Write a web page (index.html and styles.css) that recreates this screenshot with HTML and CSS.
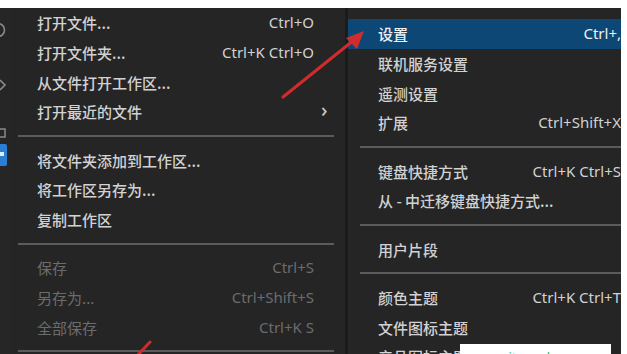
FILE: index.html
```html
<!DOCTYPE html>
<html lang="zh">
<head>
<meta charset="utf-8">
<title>菜单</title>
<link rel="stylesheet" href="styles.css">
</head>
<body>
<div class="top"></div>
<div class="screen">
  <div class="activity">
    <svg width="10" height="346" viewBox="0 0 10 346">
      <circle cx="-2" cy="22" r="6.5" fill="none" stroke="#8a8a8a" stroke-width="1.6"/>
      <path d="M0 72 L5 77 L0 82" fill="none" stroke="#8a8a8a" stroke-width="1.6"/>
      <rect x="-4" y="121" width="9" height="8" fill="none" stroke="#8a8a8a" stroke-width="1.5"/>
      <rect x="-4" y="136" width="11" height="22" rx="2" fill="#2a7fd4"/>
      <rect x="0" y="144" width="4" height="4" fill="#dfeefc"/>
    </svg>
  </div>
  <div class="menu left">
    <div class="item"><span class="label">打开文件...</span><span class="key">Ctrl+O</span><span class="sub"></span></div>
    <div class="item"><span class="label">打开文件夹...</span><span class="key">Ctrl+K Ctrl+O</span><span class="sub"></span></div>
    <div class="item"><span class="label">从文件打开工作区...</span><span class="key"></span><span class="sub"></span></div>
    <div class="item"><span class="label">打开最近的文件</span><span class="key"></span><span class="sub">›</span></div>
    <div class="sep"></div>
    <div class="item"><span class="label">将文件夹添加到工作区...</span><span class="key"></span><span class="sub"></span></div>
    <div class="item"><span class="label">将工作区另存为...</span><span class="key"></span><span class="sub"></span></div>
    <div class="item"><span class="label">复制工作区</span><span class="key"></span><span class="sub"></span></div>
    <div class="sep"></div>
    <div class="item disabled"><span class="label">保存</span><span class="key">Ctrl+S</span><span class="sub"></span></div>
    <div class="item disabled"><span class="label">另存为...</span><span class="key">Ctrl+Shift+S</span><span class="sub"></span></div>
    <div class="item disabled"><span class="label">全部保存</span><span class="key">Ctrl+K S</span><span class="sub"></span></div>
    <div class="sep"></div>
  </div>
  <div class="divider"></div>
  <div class="menu right">
    <div class="item active"><span class="label">设置</span><span class="key">Ctrl+,</span></div>
    <div class="item"><span class="label">联机服务设置</span><span class="key"></span></div>
    <div class="item"><span class="label">遥测设置</span><span class="key"></span></div>
    <div class="item"><span class="label">扩展</span><span class="key">Ctrl+Shift+X</span></div>
    <div class="sep"></div>
    <div class="item"><span class="label">键盘快捷方式</span><span class="key">Ctrl+K Ctrl+S</span></div>
    <div class="item"><span class="label">从 - 中迁移键盘快捷方式...</span><span class="key"></span></div>
    <div class="sep"></div>
    <div class="item"><span class="label">用户片段</span><span class="key"></span></div>
    <div class="sep"></div>
    <div class="item"><span class="label">颜色主题</span><span class="key">Ctrl+K Ctrl+T</span></div>
    <div class="item"><span class="label">文件图标主题</span><span class="key"></span></div>
    <div class="item"><span class="label">产品图标主题</span><span class="key"></span></div>
  </div>
  <div class="edge"></div>
</div>
<svg class="annot" width="627" height="354" viewBox="0 0 627 354">
  <line x1="283" y1="97" x2="354" y2="40" stroke="#d12c2c" stroke-width="3" stroke-linecap="round"/>
  <polygon points="364,31 346,38 357,49" fill="#d12c2c"/>
  <line x1="136" y1="357" x2="150" y2="342" stroke="#d12c2c" stroke-width="3" stroke-linecap="round"/>
</svg>
<div class="watermark"><span class="wm-text">www.xitongcheng.com</span></div>
</body>
</html>
```

FILE: styles.css
```css
html, body {
  margin: 0;
  padding: 0;
  background: #ffffff;
  width: 627px;
  height: 354px;
  overflow: hidden;
  position: relative;
  font-family: "Noto Sans", "Noto Sans CJK SC", sans-serif;
}

.top {
  height: 8px;
}

.screen {
  display: flex;
  height: 346px;
  background: #252526;
  overflow: hidden;
}

.activity {
  width: 10px;
  flex: none;
  background: #262627;
}

.activity svg {
  display: block;
}

.menu {
  display: flex;
  flex-direction: column;
  color: #d2d2d2;
  font-size: 15px;
  overflow: hidden;
}

.left {
  width: 335px;
  flex: none;
}

.divider {
  width: 3px;
  flex: none;
  background: #1b1b1c;
}

.right {
  flex: 1;
  padding-top: 11px;
  min-width: 0;
}

.edge {
  width: 6px;
  flex: none;
  background: #ffffff;
}

.item {
  height: 29.7px;
  flex: none;
  display: grid;
  align-items: center;
  white-space: nowrap;
  font-family: "Noto Sans CJK SC", "Noto Sans", sans-serif;
  font-weight: 500;
}

.left .item {
  grid-template-columns: 1fr auto 31px;
  padding-left: 27px;
}

.right .item {
  grid-template-columns: 1fr auto;
  padding-left: 30px;
  padding-right: 0;
}

.label {
  line-height: 1;
}

.key {
  font-family: "Noto Sans", sans-serif;
  font-weight: 400;
  font-size: 15px;
  line-height: 1;
}

.sub {
  padding-left: 7px;
  font-family: "Noto Sans", sans-serif;
  font-size: 20px;
  line-height: 1;
  color: #c8c8c8;
  position: relative;
  top: -2px;
}

.disabled {
  color: #6c6c6c;
  font-weight: 400;
}

.active {
  background: #0c4776;
  color: #f0f0f0;
}

.sep {
  height: 18.6px;
  flex: none;
  display: flex;
  align-items: center;
}

.sep::before {
  content: "";
  display: block;
  height: 2px;
  width: 100%;
  background: #5b5b5b;
}

.left .sep {
  margin: 0 11px 0 8px;
}

.right .sep {
  margin-left: 12px;
}

.annot {
  position: absolute;
  left: 0;
  top: 0;
  pointer-events: none;
}

.watermark {
  position: absolute;
  left: 460px;
  top: 344px;
  width: 151px;
  height: 12px;
  background: #ffffff;
  overflow: hidden;
}

.wm-text {
  display: block;
  padding: 7px 0 0 8px;
  font-family: "Noto Sans", sans-serif;
  font-size: 13px;
  line-height: 1;
  color: #35b45a;
  white-space: nowrap;
}
```
